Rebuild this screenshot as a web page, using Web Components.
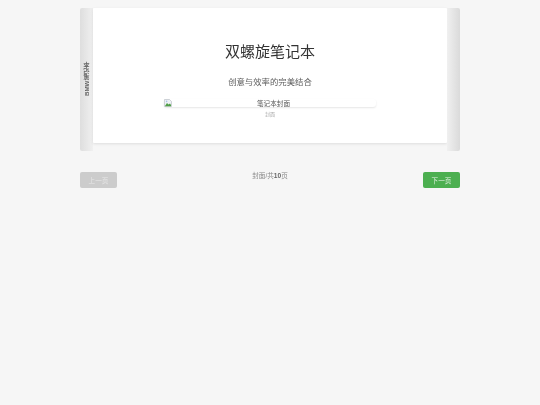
<!DOCTYPE html>
<html lang="zh">
<head>
<meta charset="utf-8">
<title>双螺旋笔记本</title>
<style>
    html, body { margin: 0; padding: 0; }
    body {
        background: #f6f6f6;
        font-family: "Liberation Sans", "Noto Sans CJK SC", sans-serif;
        height: 405px;
        overflow: hidden;
    }
</style>
</head>
<body>
<note-app></note-app>
<script>
const bookTemplate = document.createElement('template');
bookTemplate.innerHTML = `
    <style>
        :host { display: flex; height: 143px; align-items: flex-start; }
        .spine {
            width: 13px;
            height: 143px;
            flex: none;
            display: flex;
            align-items: center;
            justify-content: center;
        }
        .left {
            border-radius: 2px 0 0 2px;
            background: linear-gradient(to right, #dedede, #f0f0f0);
        }
        .right {
            border-radius: 0 2px 2px 0;
            background: linear-gradient(to right, #f0f0f0, #dadada);
        }
        .left span {
            writing-mode: vertical-rl;
            transform: rotate(180deg);
            font-size: 6.2px;
            font-weight: bold;
            color: #666;
            margin-top: 0;
        }
        .page {
            flex: 1;
            height: 135px;
            background: #fff;
            border-radius: 1px;
            box-shadow: 0 1px 3px rgba(0, 0, 0, 0.1);
        }
    </style>
    <div class="spine left"><span>BMW笔记本</span></div>
    <div class="page"><slot></slot></div>
    <div class="spine right"></div>
`;

class NoteBook extends HTMLElement {
    constructor() {
        super();
        this.attachShadow({ mode: 'open' }).appendChild(bookTemplate.content.cloneNode(true));
    }
}
customElements.define('note-book', NoteBook);

const coverTemplate = document.createElement('template');
coverTemplate.innerHTML = `
    <style>
        :host {
            display: flex;
            flex-direction: column;
            align-items: center;
            padding-top: 34px;
            color: #333;
        }
        h1 { margin: 0; font-size: 15px; line-height: 19px; font-weight: normal; }
        h2 { margin: 15px 0 0; font-size: 8.4px; line-height: 12px; font-weight: normal; color: #5c5c5c; }
        figure { margin: 11px 0 0; display: flex; flex-direction: column; align-items: center; }
        .pic {
            width: 212px;
            height: 8px;
            display: flex;
            justify-content: center;
            align-items: center;
            position: relative;
            font-size: 6.6px;
            color: #555;
            border-radius: 3px;
            box-shadow: 0 1px 2px rgba(0, 0, 0, 0.1);
        }
        .pic span { margin-left: 7px; margin-top: -1px; }
        .pic svg { position: absolute; left: 0; top: 0; }
        figcaption { margin-top: 4px; font-size: 5px; line-height: 7px; color: #aaa; }
    </style>
    <h1>双螺旋笔记本</h1>
    <h2>创意与效率的完美结合</h2>
    <figure>
        <div class="pic">
            <svg width="8" height="8" viewBox="0 0 8 8">
                <path d="M0.5 0.5h5l2 2v5h-7z" fill="#eef1f6" stroke="#b4b8bf" stroke-width="0.6"/>
                <path d="M1 7l2-3 1.5 1.5L6 4.5 7 6v1.2H1z" fill="#4f9e46"/>
                <circle cx="2.6" cy="2.4" r="0.8" fill="#a9c3ea"/>
            </svg>
            <span>笔记本封面</span>
        </div>
        <figcaption>封面</figcaption>
    </figure>
`;

class CoverPage extends HTMLElement {
    constructor() {
        super();
        this.attachShadow({ mode: 'open' }).appendChild(coverTemplate.content.cloneNode(true));
    }
}
customElements.define('cover-page', CoverPage);

const buttonTemplate = document.createElement('template');
buttonTemplate.innerHTML = `
    <style>
        :host {
            display: flex;
            width: 37px;
            height: 16px;
            align-items: center;
            justify-content: center;
            border-radius: 2px;
            font-size: 6.6px;
            color: #e4f2e4;
            background: #4caf50;
        }
        :host([disabled]) { background: #cccccc; color: #e6e6e6; }
    </style>
    <slot></slot>
`;

class PageButton extends HTMLElement {
    constructor() {
        super();
        this.attachShadow({ mode: 'open' }).appendChild(buttonTemplate.content.cloneNode(true));
    }
}
customElements.define('page-button', PageButton);

const appTemplate = document.createElement('template');
appTemplate.innerHTML = `
    <style>
        /* the reference is a scaled-down capture, so everything is a little soft */
        :host { display: block; width: 380px; margin: 0 auto; padding-top: 8px; filter: blur(0.3px); }
        nav {
            display: flex;
            justify-content: space-between;
            align-items: flex-start;
            margin-top: 21px;
        }
        .info { font-size: 6.6px; line-height: 9px; margin-top: -1px; color: #888; }
        .info b { color: #666; }
    </style>
    <note-book><cover-page></cover-page></note-book>
    <nav>
        <page-button disabled>上一页</page-button>
        <div class="info">封面/共<b>10</b>页</div>
        <page-button>下一页</page-button>
    </nav>
`;

class NoteApp extends HTMLElement {
    constructor() {
        super();
        this.attachShadow({ mode: 'open' }).appendChild(appTemplate.content.cloneNode(true));
    }
}
customElements.define('note-app', NoteApp);
</script>
</body>
</html>
